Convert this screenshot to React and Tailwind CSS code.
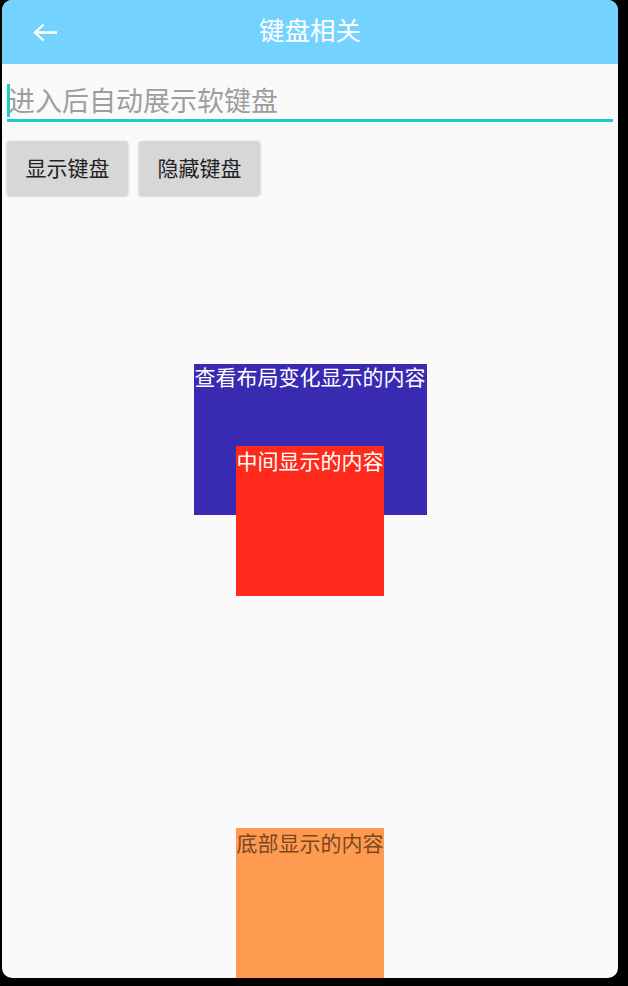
const font = { fontFamily: '"Noto Sans CJK SC", "Noto Sans", sans-serif' };

function BackArrow() {
  return (
    <svg
      className="absolute left-[30px] top-[23px]"
      width="26"
      height="19"
      viewBox="0 0 26 19"
      fill="none"
      stroke="white"
      strokeWidth="2.4"
    >
      <path d="M25 9.5H3" />
      <path d="M11.5 1.5L3 9.5L11.5 17.5" strokeLinejoin="miter" />
    </svg>
  );
}

export default function App() {
  return (
    <div className="w-[628px] h-[986px] bg-black overflow-hidden" style={font}>
      <div className="ml-[2px] w-[616px] h-[978px] bg-[#fafafa] rounded-[10px] overflow-hidden flex flex-col">
        <div className="h-[64px] bg-[#74d2fe] relative flex items-center justify-center shrink-0">
          <BackArrow />
          <span className="text-white text-[25.5px] leading-none -mt-[6px]">键盘相关</span>
        </div>

        <div className="px-[5px] pt-[16px]">
          <div className="flex items-center h-[42px] border-b-[3px] border-[#1ad0c2]">
            <span className="w-[3px] h-[33px] bg-[#1ad0c2] -mr-[2px] mt-[1px]" />
            <span className="text-[27px] leading-none text-[#9e9e9e] -mt-[1px] whitespace-nowrap">进入后自动展示软键盘</span>
          </div>
        </div>

        <div className="flex gap-[11px] px-[5px] mt-[19px]">
          <button className="w-[121px] h-[54px] bg-[#d6d7d7] rounded-[3px] shadow-[0_1px_3px_rgba(0,0,0,0.25)] text-[21px] text-[#222]">
            显示键盘
          </button>
          <button className="w-[121px] h-[54px] bg-[#d6d7d7] rounded-[3px] shadow-[0_1px_3px_rgba(0,0,0,0.25)] text-[21px] text-[#222]">
            隐藏键盘
          </button>
        </div>

        <div className="flex-1 flex flex-col items-center">
          <div className="mt-[169px] w-[233px] h-[151px] bg-[#382bb2] text-white text-[21px] leading-[1.15] text-center whitespace-nowrap">
            查看布局变化显示的内容
          </div>
          <div className="-mt-[69px] w-[148px] h-[150px] bg-[#ff2a1c] text-white text-[21px] leading-[1.35] text-center">
            中间显示的内容
          </div>
          <div className="mt-auto w-[148px] h-[150px] bg-[#ff9b51] text-[#7b4622] text-[21px] leading-[1.35] text-center">
            底部显示的内容
          </div>
        </div>
      </div>
    </div>
  );
}
